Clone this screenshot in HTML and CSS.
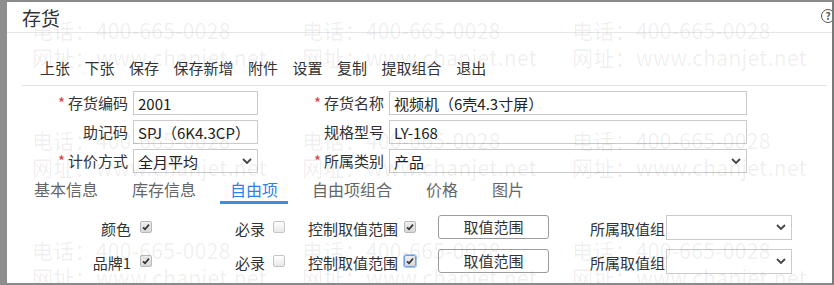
FILE: index.html
```html
<!DOCTYPE html>
<html lang="zh-CN">
<head>
<meta charset="UTF-8" />
<title>存货</title>
<link rel="stylesheet" href="styles.css">
</head>
<body>
<div class="window">
  <div class="title-bar">存货</div>
  <span class="help">?</span>

  <div class="toolbar">
    <span>上张</span>
    <span>下张</span>
    <span>保存</span>
    <span>保存新增</span>
    <span>附件</span>
    <span>设置</span>
    <span>复制</span>
    <span>提取组合</span>
    <span>退出</span>
  </div>

  <div class="form">
    <label class="lbl"><span class="req">*</span>存货编码</label>
    <div class="field">2001</div>
    <label class="lbl"><span class="req">*</span>存货名称</label>
    <div class="field">视频机（6壳4.3寸屏）</div>

    <label class="lbl">助记码</label>
    <div class="field">SPJ（6K4.3CP）</div>
    <label class="lbl">规格型号</label>
    <div class="field">LY-168</div>

    <label class="lbl"><span class="req">*</span>计价方式</label>
    <div class="field select">全月平均
      <svg class="chev" width="10" height="6" viewBox="0 0 10 6"><path d="M1 1 L5 5 L9 1" fill="none" stroke="#444" stroke-width="1.8"/></svg>
    </div>
    <label class="lbl"><span class="req">*</span>所属类别</label>
    <div class="field select">产品
      <svg class="chev" width="10" height="6" viewBox="0 0 10 6"><path d="M1 1 L5 5 L9 1" fill="none" stroke="#444" stroke-width="1.8"/></svg>
    </div>
  </div>

  <div class="tabs">
    <span class="tab">基本信息</span>
    <span class="tab">库存信息</span>
    <span class="tab active">自由项</span>
    <span class="tab">自由项组合</span>
    <span class="tab">价格</span>
    <span class="tab">图片</span>
  </div>

  <div class="free">
    <div class="free-row">
      <span class="fl fl-name">颜色</span>
      <span class="cb on"><svg width="12" height="12" viewBox="0 0 12 12"><path d="M3 6.3 L5 8.2 L9 3.6" fill="none" stroke="#333" stroke-width="1.7"/></svg></span>
      <span class="fl fl-must">必录</span>
      <span class="cb"></span>
      <span class="fl fl-ctrl">控制取值范围</span>
      <span class="cb on"><svg width="12" height="12" viewBox="0 0 12 12"><path d="M3 6.3 L5 8.2 L9 3.6" fill="none" stroke="#333" stroke-width="1.7"/></svg></span>
      <span class="btn">取值范围</span>
      <span class="fl fl-group">所属取值组</span>
      <div class="field select small">
        <svg class="chev" width="10" height="6" viewBox="0 0 10 6"><path d="M1 1 L5 5 L9 1" fill="none" stroke="#444" stroke-width="1.8"/></svg>
      </div>
    </div>
    <div class="free-row">
      <span class="fl fl-name">品牌1</span>
      <span class="cb on"><svg width="12" height="12" viewBox="0 0 12 12"><path d="M3 6.3 L5 8.2 L9 3.6" fill="none" stroke="#333" stroke-width="1.7"/></svg></span>
      <span class="fl fl-must">必录</span>
      <span class="cb"></span>
      <span class="fl fl-ctrl">控制取值范围</span>
      <span class="cb on focus"><svg width="12" height="12" viewBox="0 0 12 12"><path d="M3 6.3 L5 8.2 L9 3.6" fill="none" stroke="#333" stroke-width="1.7"/></svg></span>
      <span class="btn">取值范围</span>
      <span class="fl fl-group">所属取值组</span>
      <div class="field select small">
        <svg class="chev" width="10" height="6" viewBox="0 0 10 6"><path d="M1 1 L5 5 L9 1" fill="none" stroke="#444" stroke-width="1.8"/></svg>
      </div>
    </div>
  </div>

  <div class="watermark">
    <div><p>电话：400-665-0028</p><p>网址：www.chanjet.net</p></div>
    <div><p>电话：400-665-0028</p><p>网址：www.chanjet.net</p></div>
    <div><p>电话：400-665-0028</p><p>网址：www.chanjet.net</p></div>
    <div><p>电话：400-665-0028</p><p>网址：www.chanjet.net</p></div>
    <div><p>电话：400-665-0028</p><p>网址：www.chanjet.net</p></div>
    <div><p>电话：400-665-0028</p><p>网址：www.chanjet.net</p></div>
    <div><p>电话：400-665-0028</p><p>网址：www.chanjet.net</p></div>
    <div><p>电话：400-665-0028</p><p>网址：www.chanjet.net</p></div>
    <div><p>电话：400-665-0028</p><p>网址：www.chanjet.net</p></div>
  </div>
</div>
</body>
</html>
```

FILE: styles.css
```css
* {
  margin: 0;
  padding: 0;
  box-sizing: border-box;
}
body {
  font-family: "Noto Sans CJK SC", "Noto Sans", sans-serif;
  background: #fff;
  color: #333;
}
.window {
  position: relative;
  width: 834px;
  height: 285px;
  overflow: hidden;
  background: #fff;
  border-left: 7px solid #8e8e8e;
  border-top: 2px solid #8a8a8a;
  border-right: 2px solid #7a7a7a;
  border-bottom: 2px solid #8a8a8a;
}
.title-bar {
  height: 31px;
  line-height: 32px;
  padding-left: 15px;
  font-size: 19px;
  color: #333;
  border-bottom: 1px solid #e6e6e6;
}
.help {
  position: absolute;
  top: 7px;
  right: -3px;
  width: 14px;
  height: 14px;
  border: 1.6px solid #555;
  border-radius: 50%;
  font-size: 10px;
  font-weight: bold;
  line-height: 11px;
  text-align: center;
  color: #555;
}
.toolbar {
  display: flex;
  gap: 14.5px;
  margin-left: 15px;
  margin-right: 5px;
  padding: 26px 0 9px 18px;
  line-height: 17px;
  font-size: 15px;
  color: #333;
  border-bottom: 1px solid #e3e3e3;
}
.form {
  display: grid;
  grid-template-columns: 121px 125px 121px 358px;
  grid-auto-rows: 24px;
  column-gap: 5px;
  row-gap: 5px;
  padding-top: 5px;
}
.lbl {
  font-size: 15px;
  line-height: 24px;
  text-align: right;
  color: #333;
  white-space: nowrap;
}
.req {
  color: #e23a3a;
  margin-right: 3px;
}
.field {
  display: flex;
  align-items: center;
  height: 24px;
  padding: 0 4px;
  border: 1px solid #cbcbcb;
  font-size: 15px;
  color: #222;
  white-space: nowrap;
}
.select {
  justify-content: space-between;
  padding-right: 5px;
}
.select.small {
  justify-content: flex-end;
  width: 126px;
  height: 25px;
  margin-left: 1px;
}
.tabs {
  display: flex;
  margin-top: 6px;
  padding-left: 10px;
}
.tab {
  margin: 0 7px;
  padding: 0 10px 2px;
  font-size: 16px;
  line-height: 20px;
  color: #666;
  border-bottom: 3px solid transparent;
}
.tab.active {
  color: #2f7fe6;
  border-bottom-color: #3a8ee6;
}
.free {
  display: flex;
  flex-direction: column;
  gap: 10px;
  margin-top: 11px;
}
.free-row {
  display: flex;
  align-items: center;
  height: 24px;
}
.fl {
  font-size: 15px;
  line-height: 24px;
  color: #333;
  white-space: nowrap;
  padding-top: 3px;
}
.fl-name {
  width: 124px;
  text-align: right;
}
.fl-must {
  width: 113px;
  text-align: right;
}
.fl-ctrl {
  width: 90px;
  margin-left: 23px;
}
.fl-group {
  width: 75px;
  margin-left: 41px;
}
.cb {
  display: block;
  width: 12px;
  height: 12px;
  margin-left: 8px;
  border: 1px solid #c4c4c4;
  border-radius: 2px;
  background: linear-gradient(#fff, #e8e8e8);
}
.cb svg {
  display: block;
  margin: -1px 0 0 -1px;
}
.fl-name + .cb {
  margin-left: 9px;
}
.fl-ctrl + .cb {
  margin-left: 6px;
}
.cb.on {
  background: linear-gradient(#f0f0f0, #d8d8d8);
  border-color: #b8b8b8;
}
.cb.focus {
  border-color: #6f9fe4;
  box-shadow: 0 0 0 1px #a9c6f0;
}
.btn {
  width: 111px;
  height: 24px;
  margin-left: 22px;
  border: 1px solid #9c9c9c;
  border-radius: 3px;
  font-size: 15px;
  line-height: 22px;
  text-align: center;
  color: #333;
}
.watermark {
  position: absolute;
  top: 15px;
  left: 25px;
  display: grid;
  grid-template-columns: repeat(3, 270px);
  grid-auto-rows: 110px;
  pointer-events: none;
  color: rgba(0, 0, 0, 0.07);
  font-size: 21px;
  line-height: 27px;
  letter-spacing: 0.3px;
  white-space: nowrap;
}
```
